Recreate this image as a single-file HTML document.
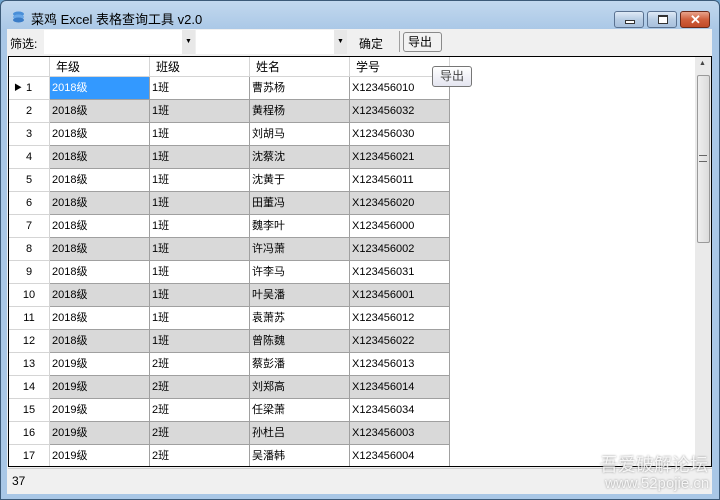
<!DOCTYPE html>
<html><head><meta charset="utf-8"><style>
*{margin:0;padding:0;box-sizing:border-box}
body{width:720px;height:500px;overflow:hidden;font-family:"Liberation Sans","Noto Sans CJK SC",sans-serif;font-size:12px;color:#000;background:#6fa4cf;position:relative}
.win{position:absolute;left:0;top:0;width:720px;height:500px;background:linear-gradient(#c2d8ee,#a9c7e6 30px,#a9c7e6);border:1px solid #3c5a78;border-radius:6px 6px 0 0}
.title{position:absolute;left:30px;top:8px;font-size:13px;color:#000}
.ico{position:absolute;left:11px;top:10px;width:13px;height:12px}
.btn{position:absolute;top:10px;height:17px;border:1px solid #5a7291;border-radius:3px;background:linear-gradient(#dfeaf6,#b8cde4 50%,#a8c0dc)}
.client{position:absolute;left:7px;top:29px;width:705px;height:465px;background:#f0f0f0}
.abs{position:absolute}
.grid{position:absolute;left:8px;top:56px;width:704px;height:411px;border:1px solid #000;background:#fff;overflow:hidden}
.c{position:absolute;height:23px;line-height:22px;border-right:1px solid #a0a0a0;border-bottom:1px solid #a0a0a0;padding-left:2px;white-space:nowrap;font-size:11px}
.hd{background:#fff;height:20px;line-height:20px;border-right:1px solid #d5d5d5;border-bottom:1px solid #d5d5d5;padding-left:6px;font-size:12px}
.rh{background:#fff;border-right:1px solid #d5d5d5;border-bottom:1px solid #d5d5d5;text-align:center;padding-left:0}
.g{background:#d9d9d9}
</style></head><body>
<div class="win">
<svg class="ico" viewBox="0 0 13 12"><ellipse cx="6.5" cy="3" rx="5.5" ry="2.5" fill="#4a8fd8"/><ellipse cx="6.5" cy="6" rx="5.5" ry="2.5" fill="#6aa8e8"/><ellipse cx="6.5" cy="9" rx="5.5" ry="2.5" fill="#3b7dc8"/></svg>
<div class="title">菜鸡 Excel 表格查询工具 v2.0</div>
<div class="btn" style="left:613px;width:30px"><div class="abs" style="left:10px;top:8px;width:10px;height:4px;border:1px solid #333;background:#fff"></div></div>
<div class="btn" style="left:646px;width:30px"><div class="abs" style="left:10px;top:3px;width:10px;height:9px;border:1px solid #333;background:#fff;border-top-width:2px"></div></div>
<div class="btn" style="left:679px;width:30px;background:linear-gradient(#e8a48c,#d0603e 50%,#c04a28);border-color:#6b2a1a"><div class="abs" style="left:9px;top:0px;color:#fff;font-weight:bold;font-size:13px">✕</div></div>
</div>
<div class="client"></div>
<div class="abs" style="left:10px;top:35px">筛选:</div>
<div class="abs" style="left:44px;top:30px;width:150px;height:24px;background:#fff"></div>
<div class="abs" style="left:182px;top:30px;width:13px;height:24px;background:#e8e8e8;font-size:7px;line-height:24px;text-align:center">▼</div>
<div class="abs" style="left:196px;top:30px;width:150px;height:24px;background:#fff"></div>
<div class="abs" style="left:334px;top:30px;width:13px;height:24px;background:#e8e8e8;font-size:7px;line-height:24px;text-align:center">▼</div>
<div class="abs" style="left:359px;top:35px">确定</div>
<div class="abs" style="left:399px;top:31px;width:1px;height:21px;background:#a0a0a0"></div>
<div class="abs" style="left:403px;top:32px;width:39px;height:20px;border:1px solid #8a8a8a;border-radius:3px;background:#f2f2f2;padding-left:4px;line-height:18px">导出</div>
<div class="grid">
<div class="c hd" style="left:0;top:0;width:41px"></div>
<div class="c hd" style="left:41px;top:0;width:100px">年级</div>
<div class="c hd" style="left:141px;top:0;width:100px">班级</div>
<div class="c hd" style="left:241px;top:0;width:100px">姓名</div>
<div class="c hd" style="left:341px;top:0;width:100px">学号</div>
<div id="rows"></div>
<div class="abs" style="left:686px;top:0;width:17px;height:410px;background:#eaeaea"></div>
<div class="abs" style="left:690px;top:3px;font-size:7px;color:#444">▲</div>
<div class="abs" style="left:688px;top:18px;width:13px;height:168px;border:1px solid #9a9a9a;border-radius:2px;background:linear-gradient(90deg,#eee,#dcdcdc)"></div>
<div class="abs" style="left:690px;top:98px;width:8px;height:7px;border-top:1px solid #666;border-bottom:1px solid #666"></div>
</div>
<div class="abs" style="left:432px;top:66px;width:40px;height:21px;border:1px solid #767676;border-radius:3px;background:linear-gradient(#fff,#e4e5f0);line-height:19px;padding-left:7px;color:#444">导出</div>
<div class="abs" style="left:8px;top:468px;width:704px;height:1px;background:#d0d0d0"></div>
<div class="abs" style="left:12px;top:474px">37</div>
<div class="abs" style="left:600px;top:451px;font-size:18px;color:rgba(255,255,255,.85);text-shadow:0 0 2px #888">吾爱破解论坛</div>
<div class="abs" style="left:605px;top:475px;font-size:15px;color:rgba(255,255,255,.85);text-shadow:0 0 2px #888">www.52pojie.cn</div>
<script>
var d=[["2018级","1班","曹苏杨","X123456010"],["2018级","1班","黄程杨","X123456032"],["2018级","1班","刘胡马","X123456030"],["2018级","1班","沈蔡沈","X123456021"],["2018级","1班","沈黄于","X123456011"],["2018级","1班","田董冯","X123456020"],["2018级","1班","魏李叶","X123456000"],["2018级","1班","许冯萧","X123456002"],["2018级","1班","许李马","X123456031"],["2018级","1班","叶吴潘","X123456001"],["2018级","1班","袁萧苏","X123456012"],["2018级","1班","曾陈魏","X123456022"],["2019级","2班","蔡彭潘","X123456013"],["2019级","2班","刘郑高","X123456014"],["2019级","2班","任梁萧","X123456034"],["2019级","2班","孙杜吕","X123456003"],["2019级","2班","吴潘韩","X123456004"]];
var h="";
d.forEach(function(r,i){var t=20+23*i,g=i%2?" g":"";
h+='<div class="c rh" style="left:0;top:'+t+'px;width:41px">'+(i==0?'<span style="position:absolute;left:5px;font-size:8px">▶</span>':'')+(i+1)+'</div>';
for(var j=0;j<4;j++){var s=(i==0&&j==0)?"background:#3399ff;color:#fff;":"";
h+='<div class="c'+g+'" style="'+s+'left:'+(41+100*j)+'px;top:'+t+'px;width:100px">'+r[j]+'</div>';}
});
document.getElementById("rows").innerHTML=h;
</script>
</body></html>
